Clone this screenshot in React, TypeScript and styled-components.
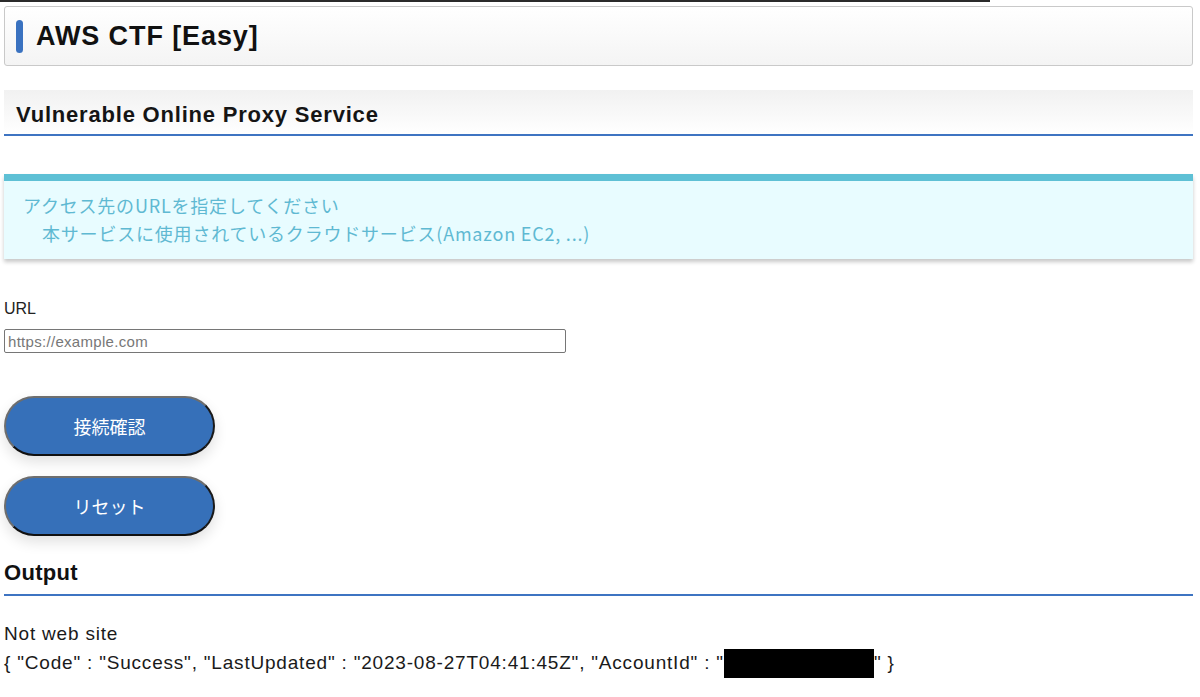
import styled, { createGlobalStyle } from 'styled-components';

const GlobalStyle = createGlobalStyle`
    html, body {
        margin: 0;
        padding: 0;
        background: #fff;
    }
    body {
        font-family: "Liberation Sans", "Noto Sans CJK JP", sans-serif;
        color: #222;
    }
`

const Page = styled.div`
    padding: 0 7px 20px 4px;
`

const TopRule = styled.div`
    width: 990px;
    height: 2px;
    margin-left: -4px;
    background: #2b2b2b;
`

const TitleBox = styled.header`
    margin-top: 4px;
    height: 58px;
    border: 1px solid #c9c9c9;
    border-radius: 3px;
    background: linear-gradient(#ffffff, #f4f4f4);
    display: flex;
    align-items: center;
    padding-left: 11px;
    gap: 13px;
`

const TitleMark = styled.span`
    width: 7px;
    height: 33px;
    border-radius: 4px;
    background: #3a72c0;
`

const Title = styled.h1`
    margin: 0;
    font-size: 27px;
    font-weight: bold;
    color: #111;
    letter-spacing: 0.9px;
`

const SubHeading = styled.h2`
    margin: 24px 0 0;
    height: 46px;
    box-sizing: border-box;
    padding: 6px 0 0 12px;
    display: flex;
    align-items: center;
    font-size: 22px;
    font-weight: bold;
    letter-spacing: 0.8px;
    color: #151515;
    background: linear-gradient(#f1f1f1, #ffffff);
    border-bottom: 2px solid #3e74c2;
`

const Notice = styled.div`
    margin-top: 38px;
    border-top: 7px solid #5ec0d5;
    background: #e8fcff;
    padding: 10px 19px 12px;
    box-shadow: 0 3px 4px rgba(0, 0, 0, 0.22);
    color: #5fb9d2;
    font-size: 18px;
    letter-spacing: 0.8px;
    line-height: 28px;
    font-family: "Noto Sans CJK JP", sans-serif;
`

const NoticeLine = styled.div<{ $indent?: boolean }>`
    padding-left: ${p => (p.$indent ? '19px' : '0')};
`

const Label = styled.label`
    display: block;
    margin-top: 41px;
    font-size: 16px;
    color: #222;
`

const UrlInput = styled.input`
    display: block;
    margin-top: 11px;
    width: 562px;
    height: 24px;
    box-sizing: border-box;
    border: 1px solid #767676;
    border-radius: 2px;
    padding: 0 3px;
    font-size: 15px;
    letter-spacing: 0.3px;
    font-family: "Liberation Sans", sans-serif;
    &::placeholder {
        color: #777;
    }
`

const Buttons = styled.div`
    margin-top: 43px;
    display: flex;
    flex-direction: column;
    gap: 20px;
    align-items: flex-start;
`

const PillButton = styled.button`
    width: 211px;
    height: 60px;
    border-radius: 30px;
    border: 2px solid;
    border-color: #6e6e6e #1a1a1a #111 #6e6e6e;
    background: #3670b9;
    color: #fff;
    font-size: 18px;
    font-family: "Noto Sans CJK JP", sans-serif;
    box-shadow: 0 6px 14px rgba(0, 0, 0, 0.12);
    cursor: pointer;
`

const OutputHeading = styled.h2`
    margin: 23px 0 0;
    padding-bottom: 7px;
    font-size: 22px;
    font-weight: bold;
    letter-spacing: 0.3px;
    color: #111;
    border-bottom: 2px solid #3e74c2;
    line-height: 28px;
`

const OutputBody = styled.div`
    margin-top: 23px;
    font-size: 19px;
    letter-spacing: 0.8px;
    line-height: 29px;
    color: #1a1a1a;
`

const Redacted = styled.span`
    display: inline-block;
    width: 150px;
    height: 29px;
    background: #000;
    vertical-align: middle;
`

export default function App() {
    return (
        <>
            <GlobalStyle />
            <Page>
                <TopRule />
                <TitleBox>
                    <TitleMark />
                    <Title>AWS CTF [Easy]</Title>
                </TitleBox>
                <SubHeading>Vulnerable Online Proxy Service</SubHeading>
                <Notice>
                    <NoticeLine>アクセス先のURLを指定してください</NoticeLine>
                    <NoticeLine $indent>本サービスに使用されているクラウドサービス(Amazon EC2, ...)</NoticeLine>
                </Notice>
                <Label htmlFor="url">URL</Label>
                <UrlInput id="url" placeholder="https://example.com" />
                <Buttons>
                    <PillButton>接続確認</PillButton>
                    <PillButton>リセット</PillButton>
                </Buttons>
                <OutputHeading>Output</OutputHeading>
                <OutputBody>
                    <div>Not web site</div>
                    <div>
                        {'{ "Code" : "Success", "LastUpdated" : "2023-08-27T04:41:45Z", "AccountId" : "'}
                        <Redacted />
                        {'" }'}
                    </div>
                </OutputBody>
            </Page>
        </>
    )
}
